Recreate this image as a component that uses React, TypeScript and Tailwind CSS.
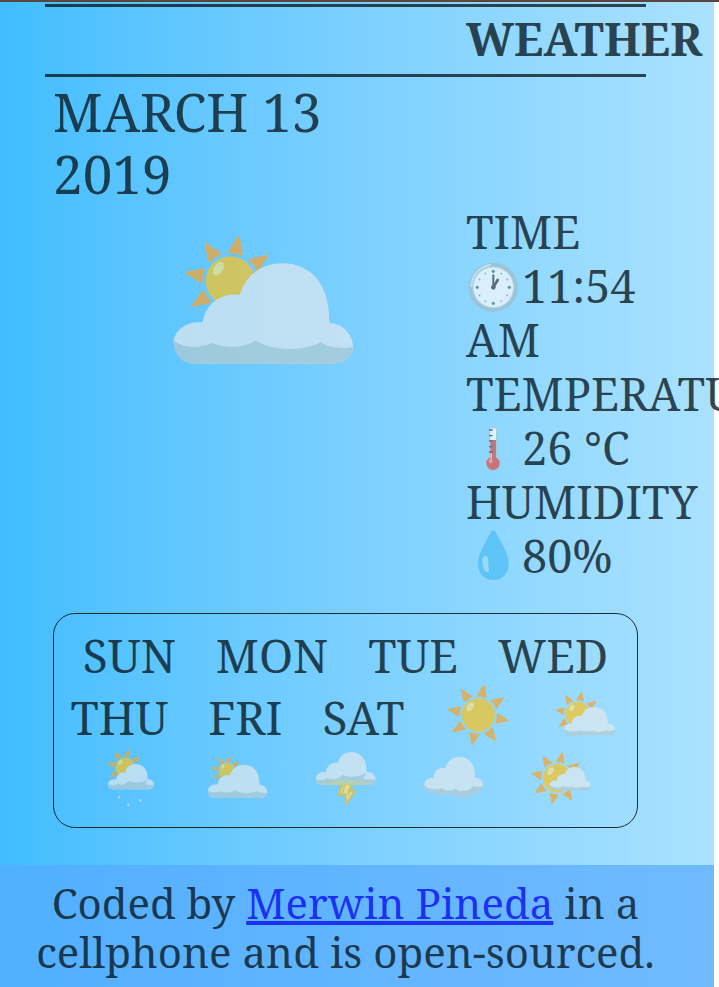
import type { ReactNode } from "react";

const RAY_ANGLES = [10, 55, 100, 146, 191, 236, 280, 326];
const CLOUD = "#e1e9ee";
const SHADE = "#b7cbd1";

/** Sun with eight rays, drawn around (x, y) with a disc of radius 50 * s. */
function Sun({ x, y, s }: { x: number; y: number; s: number }) {
  return (
    <g transform={`translate(${x} ${y}) scale(${s})`}>
      {RAY_ANGLES.map((a) => (
        <path
          key={a}
          d="M1 -91 L14 -57 Q0 -60 -13 -57 Z"
          transform={`rotate(${a})`}
          fill="#f9a32c"
          stroke="#f9a32c"
          strokeWidth="4"
          strokeLinejoin="round"
        />
      ))}
      <circle r="50" fill="#fac320" />
      <ellipse cx="-24" cy="-25" rx="9" ry="15" transform="rotate(32 -24 -25)" fill="#fbe582" />
    </g>
  );
}

/** Wide flat-bottomed cloud with the sun behind its left shoulder. */
function SunBehindLargeCloud() {
  return (
    <>
      <Sun x={214} y={168} s={1.48} />
      <path
        fill={CLOUD}
        d="M44 345C52 310 85 288 131 292C138 245 175 203 243 209C262 150 305 114 375 115C450 117 512 170 511 293C550 296 580 325 583 366C580 395 555 416 520 416H108C70 416 44 388 44 345Z"
      />
      <path
        fill={SHADE}
        d="M44 345C70 372 125 370 160 354C200 372 255 370 290 346C340 380 430 380 486 352C515 372 560 371 583 366C580 395 555 416 520 416H108C70 416 44 388 44 345Z"
      />
    </>
  );
}

function DayIcon({ label, viewBox, children }: { label: string; viewBox: string; children: ReactNode }) {
  return (
    <li>
      <svg role="img" aria-label={label} viewBox={viewBox} className="h-[62px] w-[68px] opacity-70">
        {children}
      </svg>
    </li>
  );
}

function ReadingIcon({ viewBox, children }: { viewBox: string; children: ReactNode }) {
  return (
    <svg aria-hidden="true" viewBox={viewBox} className="inline-block h-[54px] w-14 align-top opacity-70">
      {children}
    </svg>
  );
}

function Forecast() {
  return (
    <ul className="mx-2 mt-[30px] flex flex-wrap justify-center gap-x-10 rounded-[22px] border border-[#051015]/85 pt-[10px] pb-[17px] text-[46px] leading-[62px]">
      <li>SUN</li>
      <li>MON</li>
      <li>TUE</li>
      <li>WED</li>
      <li>THU</li>
      <li>FRI</li>
      <li>SAT</li>
      <DayIcon label="Sunny" viewBox="42 33 204 186">
        <Sun x={145} y={120} s={1} />
      </DayIcon>
      <DayIcon label="Partly cloudy" viewBox="366 33 204 186">
        <Sun x={443} y={117} s={0.73} />
        <path
          fill={SHADE}
          d="M402 160C402 176 410 181 420 181H538C550 181 555 174 555 162L500 150Z"
        />
        <path
          fill={CLOUD}
          d="M402 162C402 150 412 145 425 146C427 130 440 120 456 123C462 104 475 96 493 96C518 97 535 114 533 146C547 146 555 152 555 164C545 169 535 169 529 166C515 172 500 172 489 167C475 170 462 170 453 166C437 171 415 170 402 162Z"
        />
      </DayIcon>
      <DayIcon label="Sun and rain" viewBox="18 24 204 186">
        <Sun x={105} y={81} s={0.58} />
        <path
          fill={CLOUD}
          d="M54 130C57 121 66 117 78 118C80 104 91 95 105 98C110 80 122 72 137 72C158 72 174 88 173 117C185 118 192 125 192 135C190 144 185 148 176 148H68C58 147 54 140 54 130Z"
        />
        <path
          fill={SHADE}
          d="M54 132C65 138 75 137 82 132C94 137 106 133 116 123C132 130 153 129 173 119C170 125 167 130 164 132C174 136 184 136 192 134C190 144 185 148 176 148H68C58 147 54 141 54 132Z"
        />
        {[
          [87, 170],
          [115, 193],
          [151, 180],
        ].map(([x, y]) => (
          <g key={x}>
            <ellipse cx={x - 1} cy={y} rx="5" ry="7" fill="#5fb8ec" />
            <ellipse cx={x} cy={y + 1} rx="3" ry="5" fill="#c5ecff" />
          </g>
        ))}
      </DayIcon>
      <DayIcon label="Mostly cloudy" viewBox="342 24 204 186">
        <g transform="translate(339.4 36.3) scale(0.331)">
          <SunBehindLargeCloud />
        </g>
      </DayIcon>
      <DayIcon label="Thunder" viewBox="36 24 204 186">
        <defs>
          <radialGradient id="glow" cx="0.5" cy="1" r="0.5">
            <stop offset="0" stopColor="#e6d65a" />
            <stop offset="1" stopColor="#b7cbd1" />
          </radialGradient>
        </defs>
        <path
          fill={CLOUD}
          d="M48 116C50 101 63 94 78 97C80 77 96 65 114 69C119 47 134 36 155 36C182 37 202 59 199 95C217 96 227 105 227 118C226 129 220 135 211 135H65C54 134 48 126 48 116Z"
        />
        <path
          fill="url(#glow)"
          d="M48 116C60 123 73 121 82 114C98 121 115 117 128 104C148 114 174 112 198 98C196 107 193 112 189 116C202 121 218 120 227 116C226 129 220 135 211 135H65C54 134 48 127 48 116Z"
        />
        <path
          fill="#f4b928"
          stroke="#f4b928"
          strokeWidth="2"
          strokeLinejoin="round"
          d="M124 135L114 165H134L138 195L170 151H152L157 135Z"
        />
        <path fill="#ffe66b" d="M130 135L120 160H138L141 184L160 155H143L150 135Z" />
        <path fill="#f4b928" d="M136 135L130 160H125L132 135ZM150 155L142 177L144 155Z" />
      </DayIcon>
      <DayIcon label="Cloudy" viewBox="360 24 204 186">
        <path
          fill={SHADE}
          d="M372 134C372 151 384 158 402 157C411 166 428 168 442 163C453 169 461 166 468 165C477 178 509 178 516 162C536 160 549 151 549 134Z"
        />
        <path
          fill={CLOUD}
          d="M372 134C374 119 386 112 401 115C400 94 415 81 436 85C442 62 458 50 480 51C508 52 528 73 525 114C540 114 549 122 549 136C543 142 531 143 519 138C508 156 478 157 466 146C453 154 437 154 425 144C408 151 383 149 372 134Z"
        />
      </DayIcon>
      <DayIcon label="Mostly sunny" viewBox="294 219 204 186">
        <Sun x={382} y={310} s={0.86} />
        <path fill={SHADE} d="M360 328C360 341 366 346 376 346H468C478 346 483 340 483 328Z" />
        <path
          fill={CLOUD}
          d="M359 331C359 321 368 316 380 318C381 304 391 296 404 298C409 283 420 276 434 276C454 277 468 292 466 317C477 317 483 324 483 333C474 337 466 337 459 335C448 339 437 338 428 335C417 338 407 337 400 334C387 339 370 338 359 331Z"
        />
      </DayIcon>
    </ul>
  );
}

export default function App() {
  return (
    <div className="min-h-screen w-full overflow-hidden border-t-2 border-[#5a463f] bg-white font-['Noto_Serif','DejaVu_Serif_Condensed','DejaVu_Serif',serif] text-[#051015]/75">
      <div className="mr-[5px] bg-linear-to-r from-[#40bdff] to-[#aae2ff]">
        <main className="pt-[2px] pr-[68px] pb-[37px] pl-[45px]">
          <header className="grid grid-cols-[minmax(0,7fr)_minmax(0,3fr)] border-y-3 border-[#051015]/75 pr-[3px] pl-2">
            <h1 className="col-start-2 pb-1 text-[45px] leading-[63px] font-bold">WEATHER</h1>
          </header>

          <div className="grid grid-cols-[minmax(0,7fr)_minmax(0,3fr)] pt-1 pr-[3px] pl-2">
            <h2 className="text-[53px] leading-[62px]">
              MARCH 13
              <br />
              2019
            </h2>
            <div className="col-start-1 flex justify-center pt-[31px] pl-2">
              <svg
                role="img"
                aria-label="Sun behind large cloud"
                viewBox="42 33 543 384"
                className="h-32 w-[181px] opacity-70"
              >
                <SunBehindLargeCloud />
              </svg>
            </div>
            <dl className="text-[45px] leading-[54px]">
              <dt>TIME</dt>
              <dd>
                <ReadingIcon viewBox="36 27 168 162">
                  <circle cx="118" cy="112" r="74" fill="#a2bdca" />
                  <path d="M52 108C54 75 75 51 108 45" fill="none" stroke="#d2e8f1" strokeWidth="6" strokeLinecap="round" />
                  <circle cx="118" cy="112" r="61" fill="#fafafa" stroke="#c5d6d8" strokeWidth="3" />
                  {Array.from({ length: 12 }, (_, i) => (
                    <circle
                      key={i}
                      cx="118"
                      cy="64"
                      r={i % 3 === 0 ? 5 : 3}
                      transform={`rotate(${i * 30} 118 112)`}
                      fill={i % 3 === 0 ? "#557f8c" : "#8fb0ba"}
                    />
                  ))}
                  <path d="M118 112V76" stroke="#424242" strokeWidth="6" strokeLinecap="round" />
                  <path d="M118 112L131 90" stroke="#424242" strokeWidth="8" strokeLinecap="round" />
                  <circle cx="118" cy="112" r="7" fill="#424242" />
                </ReadingIcon>
                11:54 AM
              </dd>
              <dt>TEMPERATURE</dt>
              <dd>
                <ReadingIcon viewBox="36 18 168 162">
                  <path
                    d="M106 43C106 34 128 34 128 43V126C148 140 136 166 117 166C98 166 86 140 106 126Z"
                    fill="#c9d9cf"
                    stroke="#a9cbd0"
                    strokeWidth="3"
                  />
                  <path d="M109 41H126V75H109Z" fill="#ffffff" />
                  <path d="M109 75H126V128H109Z" fill="#e04a48" />
                  <circle cx="117" cy="145" r="20" fill="#e04a48" />
                  <circle cx="110" cy="138" r="6" fill="#f0999b" />
                  <path d="M105 45H116M105 62H116M105 78H116M105 95H116M105 111H116" stroke="#244f60" strokeWidth="4" />
                  <path d="M112 115V132" stroke="#f1c7ca" strokeWidth="4" />
                </ReadingIcon>
                26 °C
              </dd>
              <dt>HUMIDITY</dt>
              <dd>
                <ReadingIcon viewBox="36 342 168 162">
                  <path
                    fill="#4bbcf5"
                    d="M111 350C115 345 120 345 124 350C136 376 164 410 164 446C164 476 144 495 118 495C92 495 72 476 72 446C72 410 100 376 111 350Z"
                  />
                  <path
                    fill="#9edcfa"
                    d="M94 423C85 423 84 438 86 448C88 462 93 472 100 471C109 469 103 458 103 446C103 435 104 423 94 423Z"
                  />
                </ReadingIcon>
                80%
              </dd>
            </dl>
          </div>

          <Forecast />
        </main>

        <footer className="bg-[#57aaff]/70 pt-[13px] pr-[43px] pb-3 pl-5 text-center text-[42px] leading-[49px]">
          Coded by{" "}
          <a href="#" className="text-[#0505ee]/75 underline decoration-4 underline-offset-2">
            Merwin Pineda
          </a>{" "}
          in a cellphone and is open-sourced.
        </footer>
      </div>
    </div>
  );
}
